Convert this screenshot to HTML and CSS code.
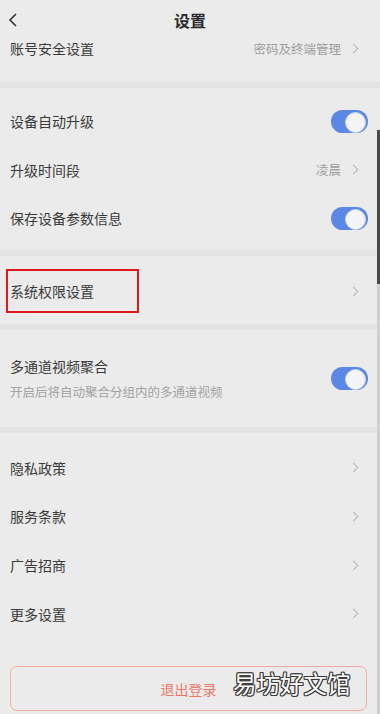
FILE: index.html
```html
<!DOCTYPE html>
<html lang="zh-CN">
<head>
  <meta charset="UTF-8">
  <meta name="viewport" content="width=device-width, initial-scale=1.0">
  <title>设置</title>
  <link rel="stylesheet" href="styles.css">
</head>
<body>
  <div class="page">
    <!-- 顶部标题栏 -->
    <div class="header">
      <svg class="back" width="12" height="16" viewBox="0 0 12 16"><path d="M9 2 L3 8 L9 14" fill="none" stroke="#333" stroke-width="1.6"/></svg>
      <span class="title">设置</span>
    </div>

    <div class="content">
      <div class="group first">
        <div class="row cut">
          <span class="label">账号安全设置</span>
          <span class="value">密码及终端管理</span>
          <span class="arrow"></span>
        </div>
      </div>

      <div class="group g-top">
        <div class="row">
          <span class="label">设备自动升级</span>
          <span class="switch on"></span>
        </div>
        <div class="row">
          <span class="label">升级时间段</span>
          <span class="value">凌晨</span>
          <span class="arrow"></span>
        </div>
        <div class="row">
          <span class="label">保存设备参数信息</span>
          <span class="switch on"></span>
        </div>
      </div>

      <div class="group g-perm">
        <div class="row">
          <span class="label">系统权限设置</span>
          <span class="arrow"></span>
          <span class="mark"></span>
        </div>
      </div>

      <div class="group g-multi">
        <div class="row tall">
          <div class="text-col">
            <span class="label">多通道视频聚合</span>
            <span class="sub">开启后将自动聚合分组内的多通道视频</span>
          </div>
          <span class="switch on"></span>
        </div>
      </div>

      <div class="group g-last">
        <div class="row">
          <span class="label">隐私政策</span>
          <span class="arrow"></span>
        </div>
        <div class="row">
          <span class="label">服务条款</span>
          <span class="arrow"></span>
        </div>
        <div class="row">
          <span class="label">广告招商</span>
          <span class="arrow"></span>
        </div>
        <div class="row">
          <span class="label">更多设置</span>
          <span class="arrow"></span>
        </div>
        <div class="logout">退出登录</div>
      </div>
    </div>

    <div class="scrollbar"><div class="thumb"></div></div>
    <div class="watermark">易坊好文馆</div>
  </div>
</body>
</html>
```

FILE: styles.css
```css
* {
  margin: 0;
  padding: 0;
  box-sizing: border-box;
}
body {
  font-family: "Noto Sans CJK SC", "Noto Sans", sans-serif;
  background-color: #ebebeb;
  color: #3a3a3a;
}

.page {
  position: relative;
  width: 380px;
  height: 714px;
  overflow: hidden;
}

/* 标题栏 */
.header {
  position: relative;
  z-index: 2;
  height: 43px;
  display: flex;
  align-items: center;
  justify-content: center;
  background-color: #ebebeb;
  padding-bottom: 4px;
}
.back {
  position: absolute;
  left: 7px;
  top: 12px;
}
.title {
  font-size: 16px;
  font-weight: bold;
  color: #2a2a2a;
}

.content {
  margin-top: -19px;
}

.group {
  border-bottom: 6px solid #e3e3e3;
}
.group.first {
  padding-bottom: 9px;
}
.g-top {
  padding: 9px 0 7px;
}
.g-perm {
  padding: 11px 0 9px;
}
.g-multi {
  padding: 8px 0 9px;
}
.g-last {
  border-bottom: none;
  padding-top: 10px;
}

.row {
  position: relative;
  height: 48.7px;
  display: flex;
  align-items: center;
  padding: 0 12px 0 10px;
}
.row.tall {
  height: 80px;
}

.label {
  font-size: 14px;
  flex: 1;
}
.value {
  font-size: 12.5px;
  color: #9e9e9e;
  margin-right: 9px;
}
.arrow {
  width: 7px;
  height: 7px;
  border-top: 1.3px solid #b5b5b5;
  border-right: 1.3px solid #b5b5b5;
  transform: rotate(45deg);
  margin-right: 11px;
}

.text-col {
  flex: 1;
  display: flex;
  flex-direction: column;
  gap: 6px;
}
.sub {
  font-size: 12.5px;
  color: #a3a3a3;
}

/* 开关 */
.switch {
  position: relative;
  width: 37px;
  height: 23px;
  border-radius: 12px;
  background-color: #5b88e4;
}
.switch::after {
  content: "";
  position: absolute;
  right: 2px;
  top: 2px;
  width: 19px;
  height: 19px;
  border-radius: 50%;
  background-color: #f4f4f4;
  border: 1px solid #c9d3e6;
}

/* 红框标注 */
.mark {
  position: absolute;
  left: 6px;
  top: 2px;
  width: 133px;
  height: 44px;
  border: 2px solid #e3161f;
}

/* 退出登录 */
.logout {
  margin: 28px 13px 0 10px;
  height: 45px;
  border: 1px solid #f4aaa0;
  border-radius: 7px;
  display: flex;
  align-items: center;
  justify-content: center;
  font-size: 14px;
  color: #ee7866;
}

/* 滚动条 */
.scrollbar {
  position: absolute;
  right: 0;
  top: 130px;
  bottom: 0;
  width: 3px;
  background-color: #cfcfcf;
}
.thumb {
  height: 154px;
  background-color: #4a4a4a;
}

/* 水印 */
.watermark {
  position: absolute;
  left: 233px;
  top: 666px;
  font-size: 23.5px;
  color: #ffffff;
  text-shadow: 1px 0 0 #3a3a3a, -1px 0 0 #3a3a3a, 0 1px 0 #3a3a3a, 0 -1px 0 #3a3a3a,
    1px 1px 0 #3a3a3a, -1px -1px 0 #3a3a3a, 1px -1px 0 #3a3a3a, -1px 1px 0 #3a3a3a;
}
```
